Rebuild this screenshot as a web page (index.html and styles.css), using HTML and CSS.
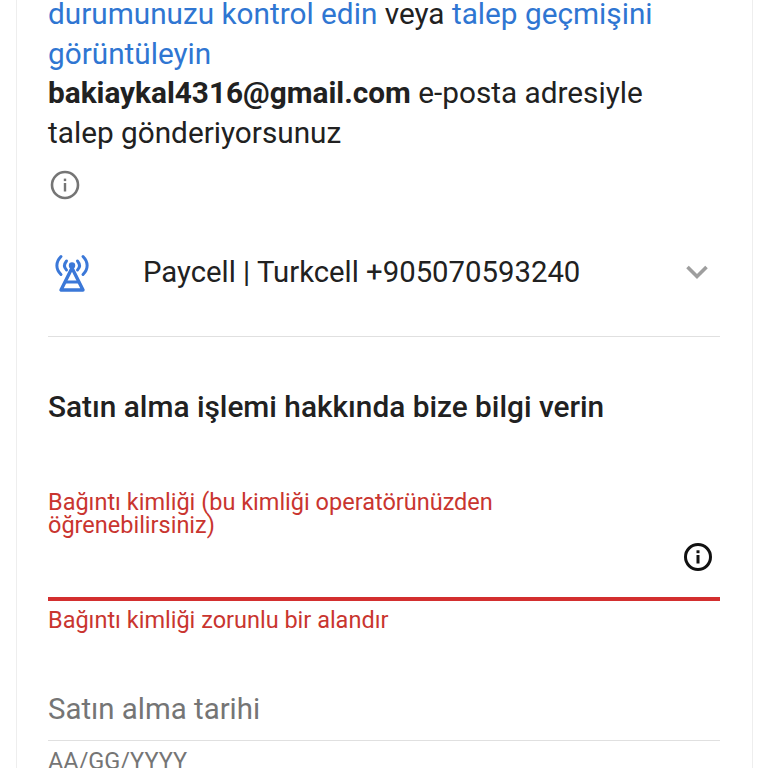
FILE: index.html
```html
<!DOCTYPE html>
<html lang="tr">
<head>
<meta charset="utf-8">
<title>Talep</title>
<link rel="stylesheet" href="styles.css">
</head>
<body>
<main class="card">
  <p class="intro"><a class="link">durumunuzu kontrol edin</a> veya <a class="link">talep geçmişini görüntüleyin</a><br><strong>bakiaykal4316@gmail.com</strong> e-posta adresiyle talep gönderiyorsunuz</p>
  <svg class="info-grey" viewBox="0 0 30 30" width="30" height="30"><circle cx="15" cy="15" r="13" fill="none" stroke="#757575" stroke-width="2.6"/><rect x="13.800" y="13" width="2.400" height="8.500" fill="#757575"/><rect x="13.800" y="8.600" width="2.400" height="2.500" fill="#757575"/></svg>
  <div class="account">
    <svg class="tower" viewBox="0 0 36 40" width="36" height="40"><g fill="none" stroke="#3b78d8" stroke-width="3" stroke-linecap="round"><path d="M7 3.500C1.500 9 1.500 16 7 21.500"/><path d="M29 3.500C34.500 9 34.500 16 29 21.500"/><path d="M12.500 8C10 11 10 14.500 12.500 17"/><path d="M23.500 8C26 11 26 14.500 23.500 17"/></g><circle cx="18" cy="12.500" r="3.200" fill="#3b78d8"/><path d="M18 15 7 37h22Z" fill="none" stroke="#3b78d8" stroke-width="3.400" stroke-linejoin="round"/><path d="M12 29h12" stroke="#3b78d8" stroke-width="3"/></svg>
    <span class="account-name">Paycell | Turkcell +905070593240</span>
    <svg class="chevron" viewBox="0 0 24 16" width="24" height="16"><path d="M2.500 3 12 12.500 21.500 3" fill="none" stroke="#9e9e9e" stroke-width="3.600"/></svg>
  </div>
  <h2 class="heading">Satın alma işlemi hakkında bize bilgi verin</h2>
  <div class="field">
    <div class="field-label">Bağıntı kimliği (bu kimliği operatörünüzden öğrenebilirsiniz)</div>
    <div class="field-input">
      <svg viewBox="0 0 30 30" width="30" height="30"><circle cx="15" cy="15" r="12.500" fill="none" stroke="#111" stroke-width="3"/><rect x="13.500" y="13" width="3" height="8.500" fill="#111"/><rect x="13.500" y="8.300" width="3" height="2.900" fill="#111"/></svg>
    </div>
    <div class="field-error">Bağıntı kimliği zorunlu bir alandır</div>
  </div>
  <div class="date">
    <div class="date-label">Satın alma tarihi</div>
    <div class="date-hint">AA/GG/YYYY</div>
  </div>
</main>
</body>
</html>
```
FILE: styles.css
```css
html, body {
  margin: 0;
  height: 768px;
  overflow: hidden;
  background: #fff;
}
body {
  font-family: Roboto, "Noto Sans", sans-serif;
  color: #212121;
}
.card {
  box-sizing: border-box;
  width: 737px;
  margin-left: 16px;
  height: 768px;
  padding: 0 32px 0 31px;
  border-left: 1px solid #eeeeee;
  border-right: 1px solid #eeeeee;
  overflow: hidden;
}
.intro {
  margin: -6px 0 0;
  max-width: 640px;
  font-size: 29.750px;
  line-height: 39.500px;
}
.link { color: #2f76d2; }
.intro strong { font-weight: 700; }
.info-grey { display: block; margin-top: 18px; margin-left: 2px; }
.account {
  display: flex;
  align-items: center;
  height: 84px;
  margin-top: 30px;
  padding-bottom: 22px;
  border-bottom: 1px solid #e0e0e0;
}
.tower { margin: 2px 0 0 6px; flex: none; }
.account-name {
  margin-left: 53px;
  flex: 1;
  font-size: 29.300px;
}
.chevron { margin-right: 11px; }
.heading {
  margin: 52px 0 0;
  font-size: 29.800px;
  line-height: 36px;
  font-weight: 500;
}
.field { margin-top: 66px; }
.field-label {
  width: 500px;
  font-size: 23.500px;
  line-height: 23px;
  color: #c9352f;
}
.field-input {
  box-sizing: border-box;
  display: flex;
  justify-content: flex-end;
  align-items: center;
  height: 65px;
  padding: 0 7px 20px 0;
  margin-top: -1px;
  border-bottom: 4px solid #d32f2f;
}
.field-error {
  margin-top: 4px;
  font-size: 23.500px;
  line-height: 30px;
  color: #c9352f;
}
.date { margin-top: 54px; }
.date-label {
  font-size: 29.400px;
  line-height: 40px;
  color: #757575;
  padding-bottom: 11px;
  border-bottom: 1px solid #e0e0e0;
}
.date-hint {
  margin-top: 5px;
  font-size: 23.500px;
  line-height: 30px;
  color: #757575;
}
```
